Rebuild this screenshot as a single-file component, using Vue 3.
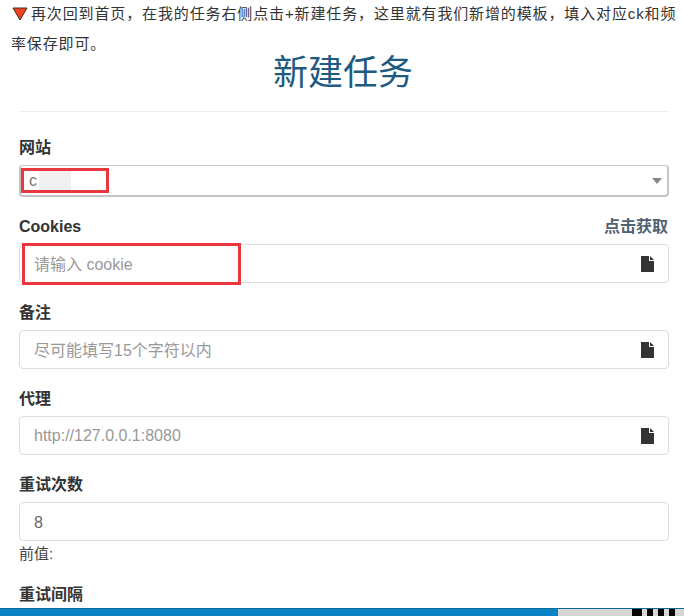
<script setup>
const fields = [
  { label: '备注', placeholder: '尽可能填写15个字符以内', cjk: true },
  { label: '代理', placeholder: 'http://127.0.0.1:8080', cjk: false }
]
</script>

<template>
  <div class="screen">
    <main class="page">
      <p class="intro"><svg class="tri" width="16" height="14" viewBox="0 0 16 14"><path d="M1 1H15L8 13Z" fill="#f4401c" stroke="#3a2a20" stroke-width="1"/></svg>再次回到首页，在我的任务右侧点击+新建任务，这里就有我们新增的模板，填入对应ck和频率保存即可。</p>
      <h1 class="title">新建任务</h1>
      <hr class="rule" />
      <section class="form">
        <div class="row">
          <div class="label">网站</div>
          <div class="control select">
            <span class="val">c</span><span class="blur"></span>
            <span class="caret"></span>
            <span class="mark mark-a"></span>
          </div>
        </div>
        <div class="row">
          <div class="label split"><span>Cookies</span><span class="fetch">点击获取</span></div>
          <div class="control">
            <span class="ph up">请输入 cookie</span>
            <svg class="file" width="13" height="16" viewBox="0 0 13 16"><path d="M0 0H8V5H13V16H0ZM9 0L13 4H9Z" fill="#333"/></svg>
            <span class="mark mark-b"></span>
          </div>
        </div>
        <div v-for="f in fields" :key="f.label" class="row">
          <div class="label">{{ f.label }}</div>
          <div class="control">
            <span class="ph" :class="{ up: f.cjk }">{{ f.placeholder }}</span>
            <svg class="file" width="13" height="16" viewBox="0 0 13 16"><path d="M0 0H8V5H13V16H0ZM9 0L13 4H9Z" fill="#333"/></svg>
          </div>
        </div>
        <div class="row">
          <div class="label">重试次数</div>
          <div class="control"><span class="num">8</span></div>
          <div class="hint">前值:</div>
        </div>
        <div class="row last">
          <div class="label">重试间隔</div>
        </div>
      </section>
    </main>
    <footer class="bar">
      <div class="bar-track"><span class="dots"><i class="w"></i><i></i><i></i><i></i></span></div>
    </footer>
  </div>
</template>

<style scoped>
.screen {
  width: 684px;
  height: 616px;
  display: flex;
  flex-direction: column;
  overflow: hidden;
  background: #fff;
  font-family: "Liberation Sans", "Noto Sans CJK SC", sans-serif;
}
.page { flex: 1; min-height: 0; overflow: hidden; }
.intro {
  margin: -1px 0 0;
  padding: 0 6px 0 11px;
  font-size: 15px;
  letter-spacing: 0.87px;
  line-height: 30px;
  color: #333;
}
.tri { vertical-align: -2px; margin: 0 3px 0 1px; }
.title {
  margin: -11px 0 0;
  text-align: center;
  font-size: 35px;
  line-height: 50px;
  font-weight: 400;
  color: #1f5a80;
  padding-left: 2px;
}
.rule {
  margin: 13px 16px 0 19px;
  border: 0;
  border-top: 1px solid #eee;
}
.form { padding: 0 15px 0 19px; }
.row { margin-top: 19px; }
.row:first-child { margin-top: 25px; }
.label {
  font-size: 16px;
  line-height: 20px;
  font-weight: 700;
  color: #333;
  padding-top: 1px;
  margin-bottom: 7px;
}
.split { display: flex; justify-content: space-between; padding-right: 1px; }
.fetch { color: #4f6272; }
.control {
  position: relative;
  height: 39px;
  box-sizing: border-box;
  border: 1px solid #ddd;
  border-radius: 4px;
  display: flex;
  align-items: center;
  padding: 0 14px;
  font-size: 16px;
  color: #999;
  background: #fff;
}
.ph.up { padding-bottom: 2px; }
.select {
  height: 32px;
  border: 2px solid #c4c4c4;
  border-top-width: 1px;
  padding: 0 5px 0 8px;
}
.val { color: #777; }
.blur { width: 32px; height: 24px; margin-left: 2px; background: #f0f0f0; }
.caret {
  margin-left: auto;
  width: 0;
  height: 0;
  border-left: 5px solid transparent;
  border-right: 5px solid transparent;
  border-top: 6px solid #888;
}
.file { margin-left: auto; margin-right: 0; }
.num { color: #666; padding-top: 2px; }
.hint { font-size: 15px; line-height: 20px; color: #444; margin-top: 3px; }
.mark { position: absolute; border: 3px solid #e8383d; box-sizing: border-box; }
.mark-a { left: 0; top: 2px; width: 88px; height: 25px; }
.mark-b { left: 2px; top: -2px; width: 219px; height: 42px; }
.row.last { margin-top: 20px; }
.bar { height: 8px; background: #0a84c6; border-top: 1px solid #0b6b99; box-sizing: border-box; }
.bar-track {
  margin-left: 558px;
  height: 100%;
  background: #d6d6d6;
  display: flex;
  justify-content: flex-end;
  padding-right: 9px;
}
.dots { display: flex; gap: 5px; }
.dots i { display: block; width: 6px; height: 7px; background: #000; }
.dots i.w { width: 10px; }
</style>
